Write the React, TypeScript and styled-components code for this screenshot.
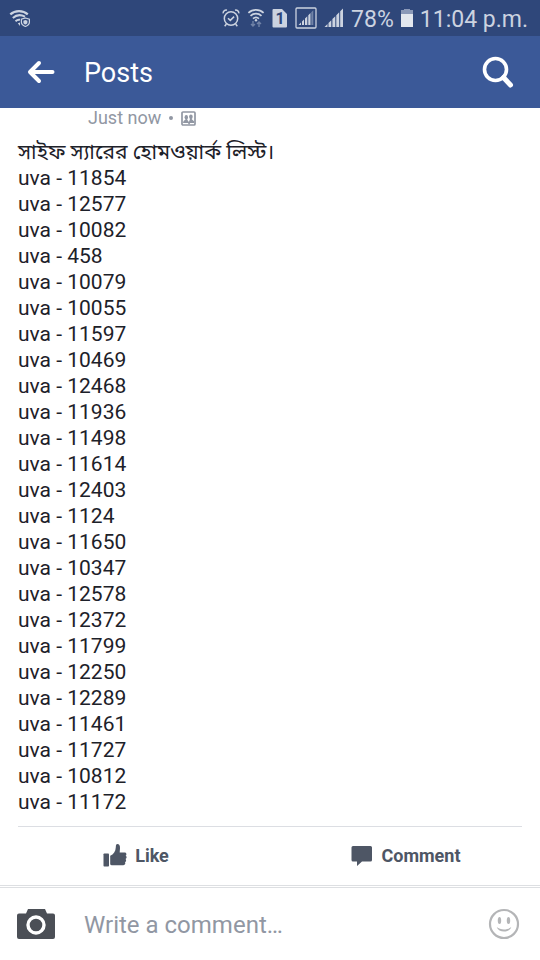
import React from "react";
import styled, { createGlobalStyle } from "styled-components";

const GlobalStyle = createGlobalStyle`
  *, *::before, *::after { box-sizing: border-box; }
  html, body, #root { height: 100%; }
  body {
    margin: 0;
    background: #ffffff;
    color: #1d2129;
    font-family: Roboto, "Noto Sans Bengali", "Noto Sans", sans-serif;
  }
  button { border: 0; padding: 0; background: none; font: inherit; color: inherit; cursor: pointer; }
  svg { display: block; flex: none; }
`;

const Screen = styled.div`
  display: flex;
  flex-direction: column;
  min-height: 100%;
`;

const StatusBar = styled.div`
  display: flex;
  align-items: center;
  justify-content: space-between;
  height: 36px;
  padding: 0 12px 0 9px;
  background: #2f477a;
  color: #ccd3e0;
  font-size: 23px;
  line-height: 32px;
  white-space: nowrap;
`;

const StatusGroup = styled.div`
  display: flex;
  align-items: center;
  gap: 7px;
`;

const StatusText = styled.span`
  padding-top: 4px;
`;

const Header = styled.header`
  display: flex;
  align-items: center;
  height: 72px;
  padding: 0 25px 0 26px;
  background: #3b5998;
  color: #ffffff;
`;

const Title = styled.h1`
  flex: 1;
  margin: 0 0 0 28px;
  padding-top: 2px;
  font-size: 27px;
  line-height: 32px;
  font-weight: 400;
`;

const IconButton = styled.button`
  display: flex;
  align-items: center;
  justify-content: center;
`;

const Post = styled.article`
  flex: 1;
  padding: 0 18px;
`;

const Meta = styled.div`
  display: flex;
  align-items: center;
  gap: 8px;
  height: 20px;
  padding-left: 70px;
  color: #9197a3;
  font-size: 18px;
  line-height: 20px;
`;

const Dot = styled.span`
  width: 4px;
  height: 4px;
  border-radius: 50%;
  background: currentColor;
`;

const Message = styled.div`
  margin: 11px 0;
  font-size: 21px;
  line-height: 26px;
`;

const Intro = styled.p`
  margin: 0;
`;

const Homework = styled.ul`
  margin: 0;
  padding: 0;
  list-style: none;
`;

const Divider = styled.hr`
  height: 1px;
  margin: 0;
  border: 0;
  background: #dcdee3;
`;

const Actions = styled.div`
  display: grid;
  grid-template-columns: 1fr 1fr;
  height: 58px;
  margin: 0 -18px;
`;

const ActionButton = styled.button`
  display: flex;
  align-items: center;
  justify-content: center;
  gap: 8px;
  && {
    padding: 0 0 2px 2px;
    color: #4e5665;
    font-size: 18px;
    font-weight: 700;
  }
`;

const Composer = styled.form`
  display: flex;
  align-items: center;
  height: 75px;
  padding: 0 20px 0 16px;
  border-top: 3px double #dddfe2;
`;

const CommentInput = styled.input`
  flex: 1;
  min-width: 0;
  margin: 0 12px 0 28px;
  padding: 2px 0 0;
  border: 0;
  outline: 0;
  background: none;
  color: #1d2129;
  font: 400 24px/32px Roboto, sans-serif;
  &::placeholder { color: #9197a3; opacity: 1; }
`;

const SimNumber = styled.text`
  fill: #2f477a;
  font-size: 16px;
  font-weight: 700;
  text-anchor: middle;
`;

const problems = [
  11854, 12577, 10082, 458, 10079, 10055, 11597, 10469, 12468, 11936, 11498, 11614, 12403,
  1124, 11650, 10347, 12578, 12372, 11799, 12250, 12289, 11461, 11727, 10812, 11172,
];

const SecureWifiIcon = () => (
  <svg width="22" height="18" viewBox="0 0 22 18" fill="none" stroke="#ccd3e0" aria-hidden="true">
    <path d="M1.3 5.4C6 1.1 14 1.1 18.8 5.4" strokeWidth="2.2" />
    <path d="M3.8 9C7.5 5.6 12 5.5 16 7.7" strokeWidth="2" />
    <path d="M6.5 12.2C8 10.9 9.5 10.5 11 10.8" strokeWidth="2" />
    <path d="M8.8 14.2l2.2-.7v3.4z" fill="#ccd3e0" stroke="none" />
    <path d="M16.4 9l4 1.2v3.1c0 2-1.7 3.3-4 4.2-2.3-.9-4-2.2-4-4.2v-3.1z" strokeWidth="1.2" />
    <path d="M16.4 11l2 .7v1.7c0 .9-.8 1.6-2 2.2-1.2-.6-2-1.3-2-2.2v-1.7z" fill="#ccd3e0" stroke="none" />
  </svg>
);

const AlarmIcon = () => (
  <svg width="18" height="20" viewBox="0 0 18 20" fill="none" stroke="#ccd3e0" strokeWidth="1.5" aria-hidden="true">
    <circle cx="9" cy="10.5" r="6.7" />
    <path d="M1.2 5.4C.8 3.5 2.8 1.7 5 2.2M16.8 5.4c.4-1.9-1.6-3.7-3.8-3.2M4.4 16L2.7 18.2M13.6 16l1.7 2.2" />
    <path d="M6 10.2l2.3 2.2 3.8-3.8" />
  </svg>
);

const WifiIcon = () => (
  <svg width="18" height="20" viewBox="0 0 18 20" fill="none" aria-hidden="true">
    <path d="M1.4 4.8c4.2-4 11-4 15.2 0M3.5 7.9c3.2-3 7.8-3 11 0M6 10.6c2-1.7 4-1.7 6 0" stroke="#ccd3e0" strokeWidth="1.7" />
    <circle cx="9" cy="12.2" r="1.2" fill="#ccd3e0" />
    <path d="M6 13v5M4 16l2 2 2-2M12 19v-5M10 16l2-2 2 2" stroke="#7183a7" strokeWidth="1.4" />
  </svg>
);

const SimIcon = () => (
  <svg width="16" height="19" viewBox="0 0 16 19" aria-label="SIM 1">
    <path d="M1.5 0H10l5 5v12.5a1 1 0 0 1-1 1H1.5a1 1 0 0 1-1-1V1a1 1 0 0 1 1-1z" fill="#ccd3e0" />
    <SimNumber x="8" y="15">1</SimNumber>
  </svg>
);

const BoxedSignalIcon = () => (
  <svg width="22" height="22" viewBox="0 0 22 22" aria-hidden="true">
    <rect x="1" y="1" width="20" height="20" rx="1" fill="none" stroke="#ccd3e0" strokeWidth="1.3" />
    <path d="M3.5 18l2.5-2.5V18zM7 18v-3.500l2-2V18zM10 18v-6.500l2.300-2.300V18zM13.300 18V8.200l2.200-2.200V18z" fill="#ccd3e0" />
    <path d="M16.3 18V5.2l2-2V18z" fill="#7183a7" />
  </svg>
);

const SignalIcon = () => (
  <svg width="20" height="20" viewBox="0 0 20 20" aria-hidden="true">
    <path d="M.5 19l3-3v3zM4.500 19v-4l2.800-2.800V19zM8.400 19v-7.900l2.900-2.900V19zM12.300 19V7.200l2.900-2.900V19zM16.200 19V3.300L19 .5V19z" fill="#ccd3e0" />
  </svg>
);

const BatteryIcon = () => (
  <svg width="12" height="18" viewBox="0 0 12 18" aria-hidden="true">
    <path d="M3 0h6v1h3v4H0V1h3z" fill="#8b99b8" />
    <path d="M0 5h12v13H0z" fill="#e3e7ee" />
  </svg>
);

const BackIcon = () => (
  <svg width="30" height="24" viewBox="0 0 30 24" fill="none" stroke="#fff" strokeWidth="4" strokeLinecap="round" strokeLinejoin="round" aria-hidden="true">
    <path d="M13 3L4 12l9 9M5 12h21.5" />
  </svg>
);

const SearchIcon = () => (
  <svg width="34" height="34" viewBox="0 0 34 34" fill="none" stroke="#fff" aria-hidden="true">
    <circle cx="14.500" cy="14.500" r="11" strokeWidth="3.600" />
    <path d="M22.500 22.500l7 7.500" strokeWidth="5" strokeLinecap="round" />
  </svg>
);

const AudienceIcon = () => (
  <svg width="15" height="15" viewBox="0 0 15 15" aria-label="Group">
    <rect x="1" y="1" width="13" height="13" rx="1" fill="none" stroke="#9197a3" strokeWidth="1.7" />
    <ellipse cx="5.3" cy="6.2" rx="1.7" ry="2.2" fill="#9197a3" />
    <ellipse cx="9.9" cy="5.8" rx="1.8" ry="2.3" fill="#9197a3" />
    <path d="M2 12c.2-2 1.200-2.700 2.400-3.300l.2-1.500h1.500l.2 1.500 1.600 2.300 1-2.800.2-1.500h1.500l.2 1.500 2.200 2V12H9.200L8 14l-1-2z" fill="#9197a3" />
  </svg>
);

const LikeIcon = () => (
  <svg width="24" height="24" viewBox="0 0 24 24" fill="#4e5665" aria-hidden="true">
    <rect x="0.5" y="10.5" width="5.5" height="13" rx="0.8" />
    <path d="M7.2 12.8c3.4-1.6 5.4-4.3 5.6-8.6.1-2.2.4-3.2 1.6-3.2 1.7 0 2.7 1.6 2.6 4l-.3 4.5h4.8c1.2 0 1.9.7 1.9 1.7 0 .8-.3 1.3-.8 1.6.7.3 1 .8 1 1.5 0 .9-.5 1.5-1.2 1.7.5.4.7.8.7 1.4 0 .9-.5 1.5-1.2 1.6.3.3.4.7.4 1.1 0 1.3-.8 2.1-2.1 2.1H8.6c-.9 0-1.4-.4-1.4-1.2z" />
  </svg>
);

const CommentIcon = () => (
  <svg width="22" height="22" viewBox="0 0 22 22" fill="#4e5665" aria-hidden="true">
    <path d="M2 2h17.5A1.5 1.5 0 0 1 21 3.500V16a1.500 1.500 0 0 1-1.500 1.500h-8.500L6 22v-4.500H2A1.500 1.500 0 0 1 .5 16V3.500A1.500 1.500 0 0 1 2 2z" />
  </svg>
);

const CameraIcon = () => (
  <svg width="40" height="32" viewBox="0 0 40 32" aria-hidden="true">
    <path d="M3 5.5h7L12 1h17l2 4.5h6a2 2 0 0 1 2 2V29a2 2 0 0 1-2 2H3a2 2 0 0 1-2-2V7.5a2 2 0 0 1 2-2z" fill="#4b4f56" />
    <circle cx="20" cy="17" r="8" fill="none" stroke="#fff" strokeWidth="3.4" />
  </svg>
);

const SmileIcon = () => (
  <svg width="32" height="32" viewBox="0 0 32 32" aria-hidden="true">
    <circle cx="16" cy="16" r="14" fill="none" stroke="#b4b5b7" strokeWidth="2.2" />
    <ellipse cx="11.5" cy="12.5" rx="1.7" ry="3.5" fill="#b4b5b7" />
    <ellipse cx="20.5" cy="12.5" rx="1.7" ry="3.5" fill="#b4b5b7" />
    <path d="M8.7 19c3.6 3.200 11 3.200 14.600 0-2 6-12.600 6-14.600 0z" fill="#b4b5b7" />
  </svg>
);

export default function App() {
  return (
    <>
      <GlobalStyle />
      <Screen>
        <StatusBar>
          <SecureWifiIcon />
          <StatusGroup>
            <AlarmIcon />
            <WifiIcon />
            <SimIcon />
            <BoxedSignalIcon />
            <SignalIcon />
            <StatusText>78%</StatusText>
            <BatteryIcon />
            <StatusText>11:04 p.m.</StatusText>
          </StatusGroup>
        </StatusBar>
        <Header>
          <IconButton type="button" aria-label="Back"><BackIcon /></IconButton>
          <Title>Posts</Title>
          <IconButton type="button" aria-label="Search"><SearchIcon /></IconButton>
        </Header>
        <Post>
          <Meta>
            <span>Just now</span>
            <Dot />
            <AudienceIcon />
          </Meta>
          <Message>
            <Intro lang="bn">সাইফ স্যারের হোমওয়ার্ক লিস্ট।</Intro>
            <Homework>
              {problems.map((id) => <li key={id}>uva - {id}</li>)}
            </Homework>
          </Message>
          <Divider />
          <Actions>
            <ActionButton type="button"><LikeIcon />Like</ActionButton>
            <ActionButton type="button"><CommentIcon />Comment</ActionButton>
          </Actions>
        </Post>
        <Composer onSubmit={(e) => e.preventDefault()}>
          <IconButton type="button" aria-label="Add a photo"><CameraIcon /></IconButton>
          <CommentInput type="text" aria-label="Write a comment" placeholder="Write a comment…" />
          <IconButton type="button" aria-label="Choose a sticker"><SmileIcon /></IconButton>
        </Composer>
      </Screen>
    </>
  );
}
